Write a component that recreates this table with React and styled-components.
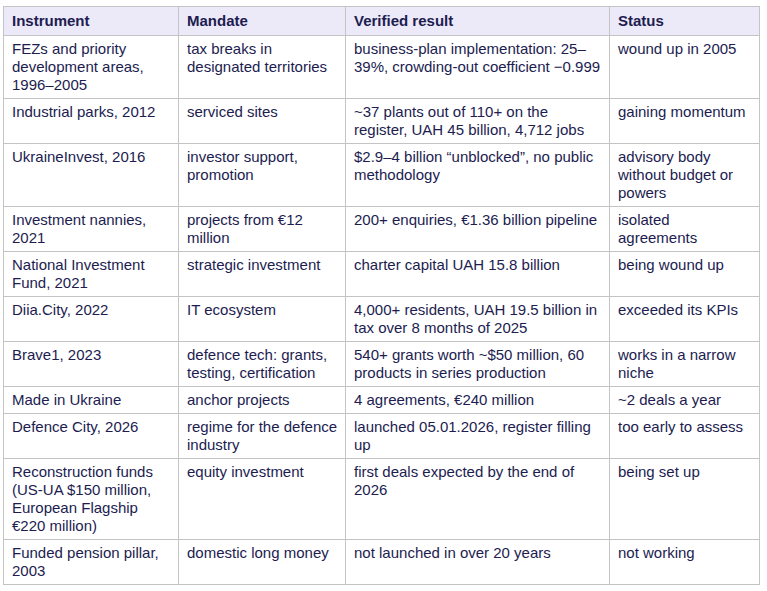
import React from 'react';
import styled, { createGlobalStyle } from 'styled-components';

const GlobalStyle = createGlobalStyle`
  body {
    margin: 0;
    background: #ffffff;
    font-family: 'Liberation Sans', Arial, sans-serif;
  }
`;

const Page = styled.div`
  padding: 6px 0 0 3px;
`;

const Table = styled.table`
  border-collapse: collapse;
  table-layout: fixed;
  width: 756px;
  font-size: 15px;
  line-height: 18px;
  color: #211c50;
`;

const HeadCell = styled.th`
  background: #eceaf8;
  border: 1px solid #c4c4c4;
  padding: 5px 7px 5px 8px;
  text-align: left;
  font-weight: bold;
  vertical-align: top;
`;

const Cell = styled.td`
  border: 1px solid #c4c4c4;
  padding: 4px 7px 4px 8px;
  vertical-align: top;
`;

const rows = [
  ['FEZs and priority development areas, 1996–2005', 'tax breaks in designated territories', 'business-plan implementation: 25–39%, crowding-out coefficient −0.999', 'wound up in 2005'],
  ['Industrial parks, 2012', 'serviced sites', '~37 plants out of 110+ on the register, UAH 45 billion, 4,712 jobs', 'gaining momentum'],
  ['UkraineInvest, 2016', 'investor support, promotion', '$2.9–4 billion “unblocked”, no public methodology', 'advisory body without budget or powers'],
  ['Investment nannies, 2021', 'projects from €12 million', '200+ enquiries, €1.36 billion pipeline', 'isolated agreements'],
  ['National Investment Fund, 2021', 'strategic investment', 'charter capital UAH 15.8 billion', 'being wound up'],
  ['Diia.City, 2022', 'IT ecosystem', '4,000+ residents, UAH 19.5 billion in tax over 8 months of 2025', 'exceeded its KPIs'],
  ['Brave1, 2023', 'defence tech: grants, testing, certification', '540+ grants worth ~$50 million, 60 products in series production', 'works in a narrow niche'],
  ['Made in Ukraine', 'anchor projects', '4 agreements, €240 million', '~2 deals a year'],
  ['Defence City, 2026', 'regime for the defence industry', 'launched 05.01.2026, register filling up', 'too early to assess'],
  ['Reconstruction funds (US-UA $150 million, European Flagship €220 million)', 'equity investment', 'first deals expected by the end of 2026', 'being set up'],
  ['Funded pension pillar, 2003', 'domestic long money', 'not launched in over 20 years', 'not working'],
];

const columns = [
  { title: 'Instrument', width: 175 },
  { title: 'Mandate', width: 167 },
  { title: 'Verified result', width: 264 },
  { title: 'Status', width: 150 },
];

export default function App() {
  return (
    <Page>
      <GlobalStyle />
      <Table>
        <colgroup>
          {columns.map((c) => (
            <col key={c.title} width={c.width} />
          ))}
        </colgroup>
        <thead>
          <tr>
            {columns.map((c) => (
              <HeadCell key={c.title}>{c.title}</HeadCell>
            ))}
          </tr>
        </thead>
        <tbody>
          {rows.map((r) => (
            <tr key={r[0]}>
              {r.map((text, i) => (
                <Cell key={i}>{text}</Cell>
              ))}
            </tr>
          ))}
        </tbody>
      </Table>
    </Page>
  );
}
